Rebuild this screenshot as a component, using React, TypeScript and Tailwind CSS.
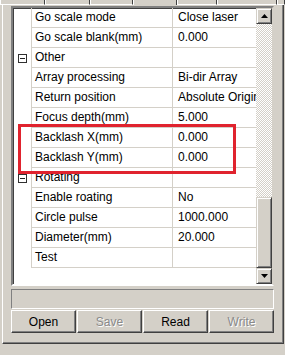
import React from "react";

type Row =
  | { kind: "cat"; label: string }
  | { kind: "prop"; label: string; value: string };

const rows: Row[] = [
  { kind: "prop", label: "Go scale mode", value: "Close laser" },
  { kind: "prop", label: "Go scale blank(mm)", value: "0.000" },
  { kind: "cat", label: "Other" },
  { kind: "prop", label: "Array processing", value: "Bi-dir Array" },
  { kind: "prop", label: "Return position", value: "Absolute Origin" },
  { kind: "prop", label: "Focus depth(mm)", value: "5.000" },
  { kind: "prop", label: "Backlash X(mm)", value: "0.000" },
  { kind: "prop", label: "Backlash Y(mm)", value: "0.000" },
  { kind: "cat", label: "Rotating" },
  { kind: "prop", label: "Enable roating", value: "No" },
  { kind: "prop", label: "Circle pulse", value: "1000.000" },
  { kind: "prop", label: "Diameter(mm)", value: "20.000" },
  { kind: "prop", label: "Test", value: "" },
];

const raised =
  "border border-t-white border-l-white border-b-[#404040] border-r-[#404040] shadow-[inset_-1px_-1px_0_#808080]";
const raisedBtn =
  "border border-t-[#d4d0c8] border-l-[#d4d0c8] border-b-[#404040] border-r-[#404040] shadow-[inset_1px_1px_0_#fff,inset_-1px_-1px_0_#808080]";

function Arrow({ up }: { up: boolean }) {
  return (
    <svg width="7" height="4" viewBox="0 0 7 4">
      {up ? (
        <polygon points="3.5,0 7,4 0,4" fill="#000" />
      ) : (
        <polygon points="0,0 7,0 3.5,4" fill="#000" />
      )}
    </svg>
  );
}

function Minus() {
  return (
    <div className="w-[9px] h-[9px] border border-[#303030] bg-white flex items-center justify-center">
      <div className="w-[5px] h-[1px] bg-[#202020]" />
    </div>
  );
}

const tabs = [
  { w: 45, sel: false },
  { w: 45, sel: false },
  { w: 43, sel: false },
  { w: 44, sel: true },
  { w: 40, sel: false },
  { w: 60, sel: false },
  { w: 8, sel: false },
];

export default function App() {
  return (
    <div className="w-[285px] h-[355px] bg-[#d4d0c8] relative overflow-hidden font-['Liberation_Sans',Arial,sans-serif] text-[12px] text-black">
      {/* tab strip */}
      <div className="flex h-[5px]">
        {tabs.map((t, i) => (
          <div
            key={i}
            style={{ width: t.w }}
            className={
              t.sel
                ? "h-[5px] border-l border-l-white border-r border-r-[#404040]"
                : "h-[5px] border-l border-l-white border-r border-r-[#404040] border-b border-b-white"
            }
          />
        ))}
      </div>
      {/* page */}
      <div className="ml-[2px] w-[282px] h-[339px] border-l border-l-white border-r border-r-[#404040] border-b border-b-[#404040] shadow-[inset_-1px_-1px_0_#808080] pl-[8px] pt-[1px] flex flex-col">
        {/* property grid */}
        <div className="w-[263px] h-[280px] border-2 border-t-[#808080] border-l-[#808080] border-b-white border-r-[#d4d0c8] shadow-[inset_1px_1px_0_#404040] bg-white flex">
          <div className="w-[243px] pt-[0px] flex flex-col">
            {rows.map((r, i) => (
              <div key={i} className="flex h-[20px] shrink-0">
                <div className="w-[19px] border-r border-r-[#d4d0c8] flex items-center justify-center pl-[1px]">
                  {r.kind === "cat" ? <Minus /> : null}
                </div>
                <div className="w-[141px] border-r border-r-[#d4d0c8] border-b border-b-[#d4d0c8] pl-[3px] leading-[19px] whitespace-nowrap overflow-hidden">
                  {r.label}
                </div>
                <div className="flex-1 border-b border-b-[#d4d0c8] pl-[5px] leading-[19px] whitespace-nowrap overflow-hidden">
                  {r.kind === "prop" ? r.value : ""}
                </div>
              </div>
            ))}
          </div>
          {/* scrollbar */}
          <div className="w-[16px] flex flex-col">
            <div className={`h-[16px] bg-[#d4d0c8] flex items-center justify-center ${raisedBtn}`}>
              <Arrow up />
            </div>
            <div className="h-[173px] bg-[repeating-conic-gradient(#d4d0c8_0_25%,#ffffff_0_50%)] bg-[length:2px_2px]" />
            <div className={`h-[71px] bg-[#d4d0c8] ${raisedBtn}`} />
            <div className={`h-[16px] bg-[#d4d0c8] flex items-center justify-center ${raisedBtn}`}>
              <Arrow up={false} />
            </div>
          </div>
        </div>
        {/* status box */}
        <div className="mt-[3px] w-[263px] h-[20px] border border-t-[#808080] border-l-[#808080] border-b-white border-r-white" />
        {/* buttons */}
        <div className="mt-[1px] w-[263px] grid grid-cols-4 gap-[1px]">
          {[
            { t: "Open", d: false },
            { t: "Save", d: true },
            { t: "Read", d: false },
            { t: "Write", d: true },
          ].map((b) => (
            <div
              key={b.t}
              className={`h-[23px] flex items-center justify-center ${raised} ${
                b.d ? "text-[#8a8a8a] [text-shadow:1px_1px_0_#fff]" : "text-black"
              }`}
            >
              {b.t}
            </div>
          ))}
        </div>
      </div>
      {/* red highlight */}
      <div className="absolute left-[18px] top-[124px] w-[218px] h-[50px] border-[3px] border-[#e0232e]" />
    </div>
  );
}
